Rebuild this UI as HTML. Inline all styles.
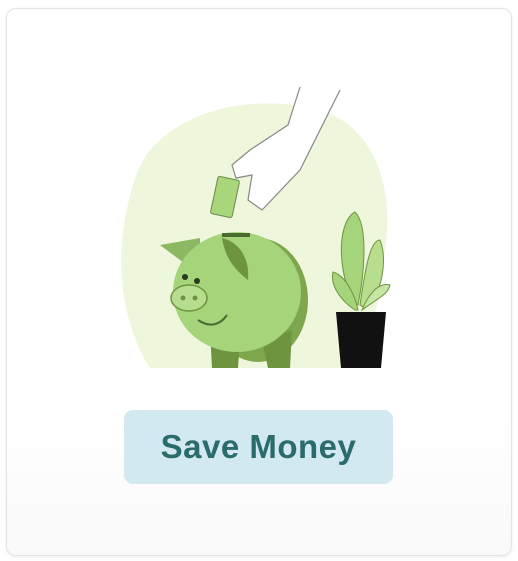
<!DOCTYPE html>
<html><head><style>
html,body{margin:0;padding:0;background:#fff;}
body{width:518px;height:561px;position:relative;overflow:hidden;font-family:"Liberation Sans",sans-serif;}
.card{position:absolute;left:6px;top:8px;width:504px;height:546px;border:1.5px solid #dfe6e2;border-radius:10px;background:linear-gradient(#fff 75%,#f8f9f8);box-shadow:0 1px 3px rgba(0,0,0,.08);}
.btn{position:absolute;left:124px;top:410px;width:269px;height:74px;background:#d3e9f1;border-radius:9px;color:#2a6b6c;font-weight:bold;font-size:33px;text-align:center;line-height:74px;letter-spacing:0.5px;}
svg{position:absolute;left:0;top:0;}
</style></head><body>
<div class="card"></div>
<svg width="518" height="561" viewBox="0 0 518 561">
<path d="M150 150 C190 105 260 95 320 110 C370 125 395 180 385 250 C378 310 370 360 340 368 L150 368 C125 330 115 270 125 220 C130 190 138 165 150 150Z" fill="#eef6dc"/>
<path d="M300 87 L288 125 L250 150 L232 165 L236 178 L252 175 L248 200 L262 210 L300 170 L340 90" fill="#fff" stroke="#888" stroke-width="1.2"/>
<rect x="214" y="178" width="22" height="38" rx="2" transform="rotate(12 225 197)" fill="#a9d67a" stroke="#6a8a4a" stroke-width="1"/>
<ellipse cx="258" cy="300" rx="50" ry="62" fill="#7ea64c"/>
<path d="M210 330 L212 368 L238 368 L240 340Z M262 340 L268 368 L290 368 L292 330Z" fill="#6e9440"/>
<path d="M160 245 L200 238 L200 275 Z" fill="#8cb862"/>
<ellipse cx="237" cy="292" rx="64" ry="60" fill="#a5d47a"/>
<path d="M222 238 C240 242 250 260 248 280 C235 270 225 258 222 238Z" fill="#6e9440"/>
<rect x="222" y="233" width="28" height="4" fill="#4c6a30"/>
<ellipse cx="189" cy="298" rx="18" ry="13" fill="#b7de8f" stroke="#6e9440" stroke-width="1.5"/>
<circle cx="183" cy="298" r="2.5" fill="#6e9440"/><circle cx="195" cy="298" r="2.5" fill="#6e9440"/>
<circle cx="185" cy="277" r="3" fill="#2a3a20"/><circle cx="197" cy="281" r="3" fill="#2a3a20"/>
<path d="M198 320 C210 328 220 325 227 315" fill="none" stroke="#4c6a30" stroke-width="2"/>
<path d="M352 300 C335 260 340 220 355 212 C368 225 365 270 358 305Z" fill="#a5d47a" stroke="#6e9440" stroke-width="1"/>
<path d="M360 305 C365 270 370 240 380 240 C388 260 382 295 365 308Z" fill="#b7de8f" stroke="#6e9440" stroke-width="1"/>
<path d="M355 310 C340 300 330 285 333 272 C345 275 355 295 358 310Z" fill="#a5d47a" stroke="#6e9440" stroke-width="1"/>
<path d="M362 310 C375 300 388 295 390 285 C378 282 368 295 362 310Z" fill="#c6e6a4" stroke="#6e9440" stroke-width="1"/>
<path d="M336 312 L386 312 L381 368 L341 368Z" fill="#111"/>
</svg>
<div class="btn">Save Money</div>
</body></html>
